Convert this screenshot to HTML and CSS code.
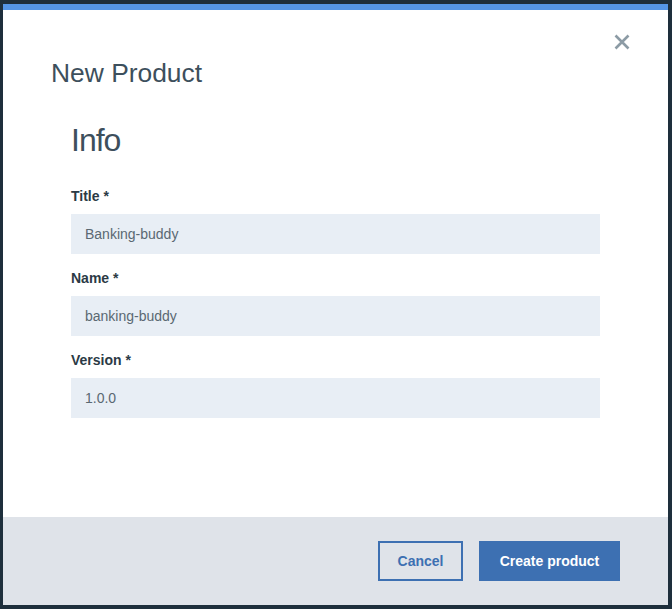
FILE: index.html
```html
<!DOCTYPE html>
<html>
<head>
<meta charset="utf-8">
<link rel="stylesheet" href="styles.css">
</head>
<body>
<div class="modal">
  <button class="close" aria-label="Close">
    <svg width="16" height="16" viewBox="0 0 16 16"><path d="M1.5 1.5 L14.5 14.5 M14.5 1.5 L1.5 14.5" stroke="#8c9ba5" stroke-width="2.6" stroke-linecap="butt"/></svg>
  </button>
  <div class="body">
    <h1 class="title">New Product</h1>
    <div class="form">
      <h2 class="section">Info</h2>
      <div class="field">
        <label class="label">Title *</label>
        <div class="input">Banking-buddy</div>
      </div>
      <div class="field">
        <label class="label">Name *</label>
        <div class="input">banking-buddy</div>
      </div>
      <div class="field">
        <label class="label">Version *</label>
        <div class="input">1.0.0</div>
      </div>
    </div>
  </div>
  <div class="footer">
    <button class="btn btn-secondary">Cancel</button>
    <button class="btn btn-primary">Create product</button>
  </div>
</div>
</body>
</html>
```
FILE: styles.css
```css
html, body {
  margin: 0;
  height: 100%;
}
body {
  background: #1e2f3c;
  padding: 4px 4px 4px 3px;
  box-sizing: border-box;
  font-family: "Liberation Sans", Arial, sans-serif;
}
.modal {
  position: relative;
  height: 601px;
  background: #ffffff;
  border-top: 6px solid #5596e6;
  box-sizing: border-box;
  display: flex;
  flex-direction: column;
}
.close {
  position: absolute;
  top: 24px;
  right: 38px;
  width: 16px;
  height: 16px;
  padding: 0;
  border: 0;
  background: none;
  display: flex;
}
.body {
  flex: 1;
  padding: 47px 48px 0 48px;
}
.title {
  margin: 0;
  font-size: 26.4px;
  line-height: 32px;
  font-weight: 300;
  color: #3d4f5c;
}
.form {
  padding-left: 20px;
  width: 529px;
}
.section {
  margin: 31px 0 28px;
  font-size: 32px;
  line-height: 40px;
  font-weight: 300;
  letter-spacing: -1px;
  color: #3d4f5c;
}
.field {
  display: flex;
  flex-direction: column;
  gap: 9px;
  margin-bottom: 16px;
}
.label {
  font-size: 14px;
  line-height: 17px;
  font-weight: 700;
  color: #2b3a45;
}
.input {
  height: 40px;
  background: #e8eef5;
  padding: 0 14px;
  display: flex;
  align-items: center;
  font-size: 14px;
  color: #5a6872;
}
.footer {
  height: 88px;
  background: #dfe3e9;
  display: flex;
  justify-content: flex-end;
  align-items: center;
  gap: 16px;
  padding: 0 48px;
}
.btn {
  height: 40px;
  box-sizing: border-box;
  font-family: "Liberation Sans", Arial, sans-serif;
  font-size: 14px;
  font-weight: 700;
  padding: 0;
}
.btn-secondary {
  width: 85px;
  background: transparent;
  border: 2px solid #3d70b2;
  color: #3d70b2;
}
.btn-primary {
  width: 141px;
  background: #3d70b2;
  border: 0;
  color: #ffffff;
}
```
